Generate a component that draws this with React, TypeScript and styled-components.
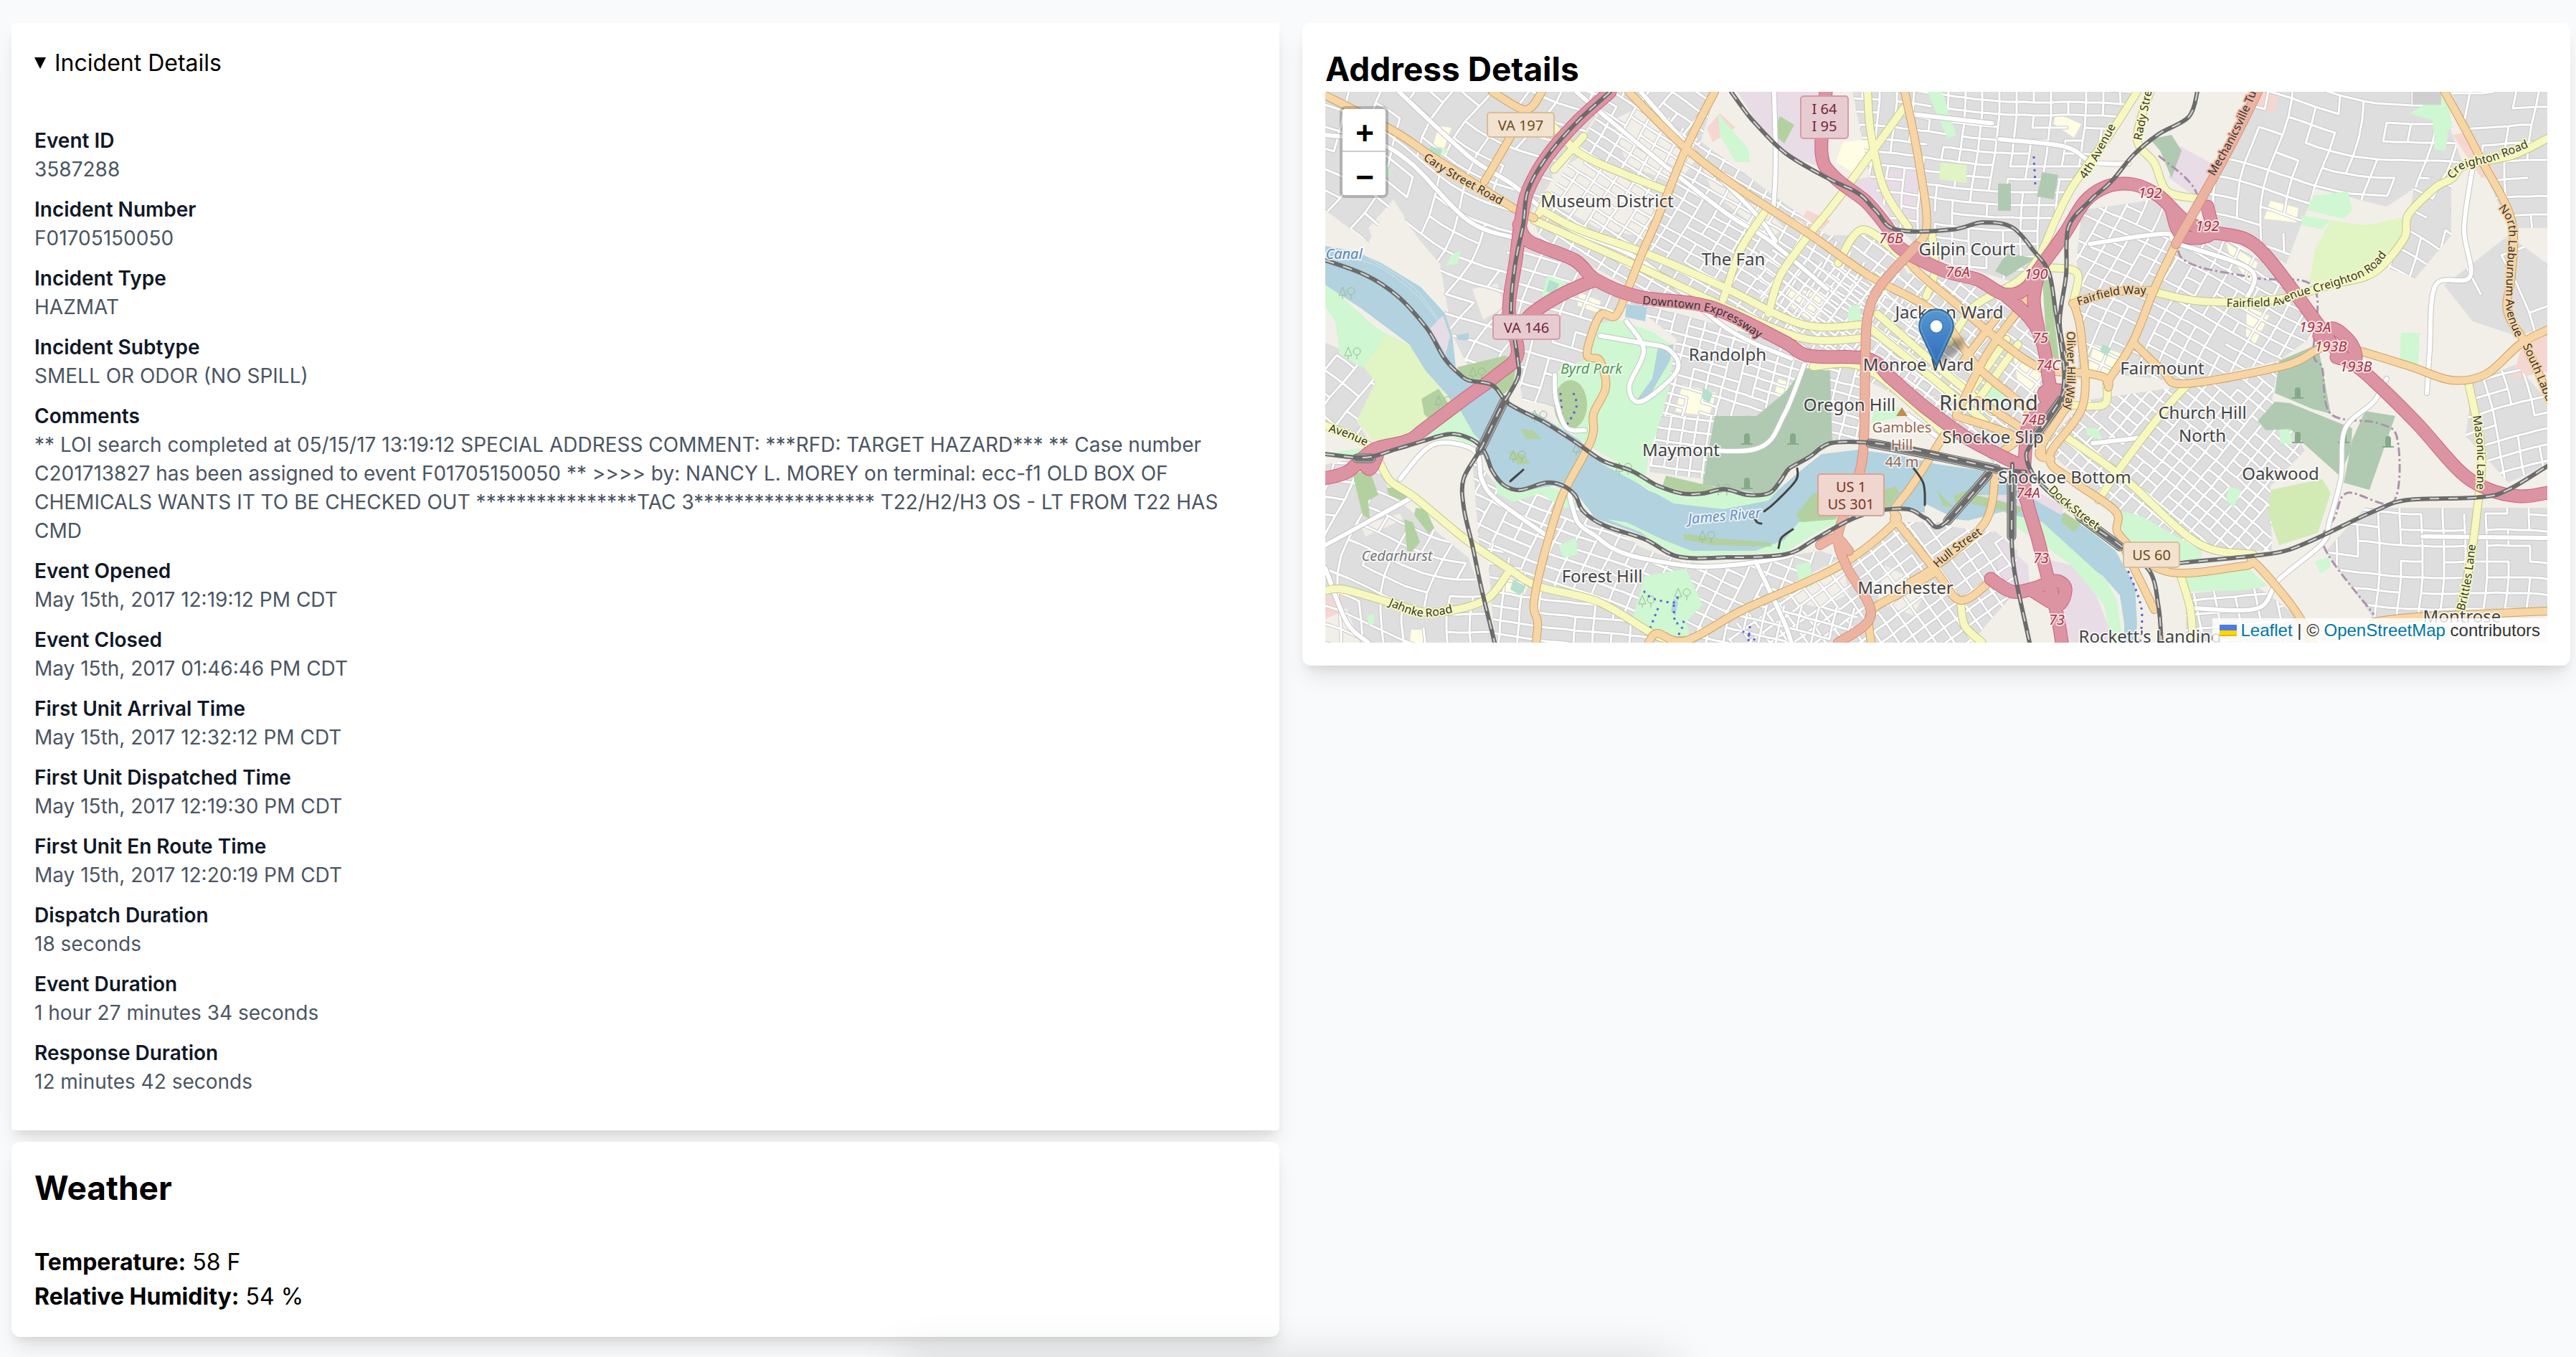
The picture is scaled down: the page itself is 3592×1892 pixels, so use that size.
import React from 'react';
import styled, { createGlobalStyle } from 'styled-components';

const sans = `Inter, "Liberation Sans", sans-serif`;
const mapSans = `"Noto Sans", "Open Sans", sans-serif`;

const GlobalStyle = createGlobalStyle`
  *, *::before, *::after { box-sizing: border-box; }
  body {
    margin: 0;
    background: #f9fafb;
    color: #000;
    font-family: ${sans};
    font-size: 32px;
    line-height: 48px;
  }
  h2, p, dl, dt, dd { margin: 0; }
`;

/* ---------- page ---------- */

const Page = styled.main`
  display: grid;
  grid-template-columns: repeat(2, minmax(0, 1fr));
  align-items: start;
  gap: 32px;
  padding: 32px 8px 28px 16px;
`;

const Column = styled.div`
  display: flex;
  flex-direction: column;
  gap: 16px;
`;

const Card = styled.section<{ $radius?: number }>`
  padding: 32px;
  background: #fff;
  border-radius: ${(p) => p.$radius ?? 12}px;
  box-shadow: 0 20px 30px -6px rgba(0, 0, 0, 0.1), 0 8px 12px -4px rgba(0, 0, 0, 0.07);
`;

const Title = styled.h2`
  font-size: 46px;
  line-height: 64px;
  font-weight: 700;
`;

const Summary = styled.summary`
  display: flex;
  align-items: center;
  gap: 12px;
  list-style: none;
  cursor: pointer;

  &::-webkit-details-marker { display: none; }

  &::before {
    content: '';
    width: 16px;
    height: 16px;
    background: #000;
    clip-path: polygon(0 0, 100% 0, 50% 100%);
  }

  details:not([open]) > &::before { transform: rotate(-90deg); }
`;

const Fields = styled.dl`
  display: flex;
  flex-direction: column;
  gap: 16px;
  padding: 64px 0 16px;
  font-size: 28px;
  line-height: 40px;
`;

const Label = styled.dt`
  color: #111827;
  font-weight: 600;
`;

const Value = styled.dd`
  color: #4b5563;
`;

const Readings = styled.div`
  padding-top: 48px;
`;

const ToastShadow = styled.div`
  position: fixed;
  top: 100%;
  left: 50%;
  width: 1080px;
  height: 120px;
  transform: translateX(-50%);
  box-shadow: 0 0 64px rgba(0, 0, 0, 0.13);
  pointer-events: none;
`;

/* ---------- map chrome ---------- */

const MapBox = styled.div`
  position: relative;
  height: 768px;
  overflow: hidden;
  background: #ddd;
`;

const MapDrawing = styled.svg`
  display: block;
  width: 100%;
  height: 100%;
`;

const ZoomBar = styled.div`
  position: absolute;
  top: 20px;
  left: 20px;
  display: flex;
  flex-direction: column;
  border: 4px solid rgba(0, 0, 0, 0.2);
  border-radius: 8px;
  background-clip: padding-box;
`;

const ZoomButton = styled.button`
  width: 60px;
  height: 60px;
  padding: 10px 0 0 2px;
  border: 0;
  background: #fff;
  color: #000;
  font: 700 44px/48px "Liberation Sans", Arial, sans-serif;
  cursor: pointer;

  &:first-child {
    border-bottom: 2px solid #ccc;
    border-radius: 4px 4px 0 0;
  }
  &:last-child { border-radius: 0 0 4px 4px; }
`;

const Pin = styled.svg`
  position: absolute;
  left: 50%;
  bottom: 50%;
  width: 82px;
  height: 82px;
  margin-left: -25px;
`;

const Attribution = styled.div`
  position: absolute;
  right: 0;
  bottom: 0;
  padding: 0 10px;
  background: rgba(255, 255, 255, 0.8);
  color: #333;
  font: 24px/34px "Liberation Sans", Helvetica, Arial, sans-serif;

  a {
    color: #0078a8;
    text-decoration: none;
  }
  svg {
    width: 24px;
    height: 16px;
    margin-right: 6px;
  }
`;

/* ---------- map drawing ---------- */

const Area = styled.path<{ $fill: string }>`
  fill: ${(p) => p.$fill};
`;

const Line = styled.path<{ $color: string; $width: number; $dash?: string }>`
  fill: none;
  stroke: ${(p) => p.$color};
  stroke-width: ${(p) => p.$width}px;
  stroke-dasharray: ${(p) => p.$dash ?? 'none'};
  stroke-linejoin: round;
  stroke-linecap: ${(p) => (p.$dash ? 'butt' : 'round')};
`;

const MapText = styled.text<{ $size?: number; $color?: string; $italic?: boolean; $halo?: string; $start?: boolean }>`
  font-family: ${mapSans};
  font-size: ${(p) => p.$size ?? 24}px;
  font-style: ${(p) => (p.$italic ? 'italic' : 'normal')};
  fill: ${(p) => p.$color ?? '#444'};
  stroke: ${(p) => p.$halo ?? 'rgba(255, 255, 255, 0.7)'};
  stroke-width: 4px;
  stroke-linejoin: round;
  paint-order: stroke;
  text-anchor: ${(p) => (p.$start ? 'start' : 'middle')};
`;

const ShieldText = styled.text<{ $color: string }>`
  font-family: ${mapSans};
  font-size: 20px;
  fill: ${(p) => p.$color};
  text-anchor: middle;
`;

type Point = [number, number];

const parse = (list: string): Point[] =>
  list.split(' ').map((pair) => pair.split(',').map(Number) as Point);

const polygon = (list: string) => `M${list.split(' ').join('L')}Z`;

/* A smooth curve through every point of the list. */
const curve = (list: string) => {
  const p = parse(list);
  let d = `M${p[0]}`;
  for (let i = 0; i < p.length - 1; i++) {
    const a = p[i - 1] ?? p[i];
    const b = p[i];
    const c = p[i + 1];
    const e = p[i + 2] ?? c;
    d += `C${Math.round(b[0] + (c[0] - a[0]) / 6)},${Math.round(b[1] + (c[1] - a[1]) / 6)} ${Math.round(
      c[0] - (e[0] - b[0]) / 6,
    )},${Math.round(c[1] - (e[1] - b[1]) / 6)} ${c}`;
  }
  return d;
};

const random = (seed: number) => () => {
  seed = (seed * 16807) % 2147483647;
  return seed / 2147483647;
};

interface Zone {
  shape: string;
  angle: number;
  dx: number;
  dy: number;
  bend: number;
  skip: number;
}

const zones: Zone[] = [
  { shape: '0,0 400,0 275,185 258,300 262,385 200,385 178,340 167,309 160,240 130,210 95,150 60,210 0,165', angle: 28, dx: 40, dy: 28, bend: 12, skip: 0.24 },
  { shape: '290,180 400,0 430,0 850,310 850,450 640,345 430,275 300,205', angle: 31, dx: 24, dy: 15, bend: 2, skip: 0.06 },
  { shape: '425,0 545,0 520,80 600,150 700,200 780,200 840,300 852,320 640,180', angle: 37, dx: 25, dy: 20, bend: 2, skip: 0.2 },
  { shape: '735,0 1130,0 1042,132 1000,240 960,265 840,230 790,180 760,120', angle: 4, dx: 24, dy: 18, bend: 4, skip: 0.18 },
  { shape: '265,190 420,285 400,310 370,370 325,390 320,440 275,430 262,340', angle: 20, dx: 28, dy: 22, bend: 5, skip: 0.2 },
  { shape: '420,290 640,350 745,372 745,490 704,490 700,385 664,385 640,430 600,452 470,452 490,345', angle: 16, dx: 22, dy: 14, bend: 2, skip: 0.08 },
  { shape: '600,220 760,250 900,260 985,310 1005,400 935,520 860,455 750,375 610,330', angle: 38, dx: 19, dy: 15, bend: 1, skip: 0.06 },
  { shape: '1060,430 1200,410 1310,385 1330,375 1320,430 1366,500 1318,550 1320,640 1216,640 1100,580 1000,495', angle: 40, dx: 19, dy: 16, bend: 1, skip: 0.07 },
  { shape: '1055,165 1160,150 1195,200 1260,205 1310,240 1385,335 1330,375 1198,405 1090,392 1050,400 1048,230', angle: 27, dx: 24, dy: 18, bend: 3, skip: 0.15 },
  { shape: '1300,0 1550,0 1590,110 1540,120 1480,160 1380,135 1340,240 1250,190 1216,160', angle: 10, dx: 34, dy: 26, bend: 9, skip: 0.2 },
  { shape: '1570,0 1704,0 1704,190 1650,190 1610,95', angle: 3, dx: 32, dy: 25, bend: 7, skip: 0.25 },
  { shape: '1520,120 1570,110 1570,200 1520,260 1480,245 1512,170', angle: 25, dx: 32, dy: 28, bend: 9, skip: 0.3 },
  { shape: '1560,270 1650,200 1704,240 1704,330 1660,340 1600,320', angle: -20, dx: 52, dy: 44, bend: 6, skip: 0.5 },
  { shape: '560,768 583,722 720,660 800,600 920,600 965,640 960,700 900,768', angle: -36, dx: 21, dy: 18, bend: 1, skip: 0.08 },
  { shape: '205,510 250,560 320,555 345,570 440,635 495,655 560,660 690,640 720,650 520,760 460,755 383,712 296,689 215,640', angle: 22, dx: 26, dy: 18, bend: 4, skip: 0.14 },
  { shape: '0,520 70,505 90,560 200,650 240,768 0,768', angle: 12, dx: 32, dy: 25, bend: 14, skip: 0.24 },
  { shape: '225,620 300,690 383,712 470,768 236,768', angle: 8, dx: 26, dy: 19, bend: 3, skip: 0.16 },
  { shape: '500,768 600,715 750,720 720,768', angle: 14, dx: 24, dy: 20, bend: 2, skip: 0.12 },
  { shape: '1200,700 1300,690 1360,735 1380,768 1200,768', angle: -8, dx: 28, dy: 20, bend: 3, skip: 0.15 },
  { shape: '1395,640 1450,580 1704,580 1704,720 1510,735 1462,735', angle: 3, dx: 30, dy: 22, bend: 4, skip: 0.18 },
  { shape: '1600,405 1660,380 1704,430 1704,520 1650,545 1590,480', angle: -14, dx: 28, dy: 22, bend: 4, skip: 0.2 },
  { shape: '0,350 55,372 70,405 44,459 60,485 0,460', angle: 30, dx: 30, dy: 26, bend: 8, skip: 0.25 },
  { shape: '458,452 550,452 530,540 452,530', angle: 8, dx: 18, dy: 18, bend: 1, skip: 0.08 },
];

const streets = (zone: Zone, seed: number) => {
  const pts = parse(zone.shape);
  const xs = pts.map((p) => p[0]);
  const ys = pts.map((p) => p[1]);
  const cx = (Math.min(...xs) + Math.max(...xs)) / 2;
  const cy = (Math.min(...ys) + Math.max(...ys)) / 2;
  const reach = Math.hypot(Math.max(...xs) - cx, Math.max(...ys) - cy) + 30;
  const rad = (zone.angle * Math.PI) / 180;
  const next = random(seed * 7919 + 13);
  const place = (x: number, y: number) => {
    const u = x + zone.bend * Math.sin(y / 41 + seed);
    const v = y + zone.bend * Math.sin(x / 53 + seed * 2);
    return `${Math.round(cx + u * Math.cos(rad) - v * Math.sin(rad))},${Math.round(cy + u * Math.sin(rad) + v * Math.cos(rad))}`;
  };
  let d = '';
  for (let y = -reach; y < reach; y += zone.dy) {
    for (let x = -reach; x < reach; x += zone.dx) {
      if (next() > zone.skip) d += `M${place(x, y)}L${place(x + zone.dx / 2, y)}L${place(x + zone.dx, y)}`;
      if (next() > zone.skip) d += `M${place(x, y)}L${place(x, y + zone.dy)}`;
    }
  }
  return d;
};

const colors = {
  land: '#f2efe9',
  built: '#dedede',
  park: '#cff7d1',
  golf: '#e0f5c3',
  wood: '#b3d1a0',
  cemetery: '#b0cab2',
  school: '#fffde4',
  industry: '#e8dce7',
  retail: '#f6d6d1',
  pitch: '#b4e0cd',
  water: '#b1d2de',
};

/* Grounds that the street grid runs across. */
const grounds: [string, string][] = [
  [colors.land, '318,112 354,92 480,150 455,205 380,190 306,150'],
  [colors.land, '400,40 440,20 520,90 490,130 420,100'],
  [colors.land, '520,90 600,150 640,190 620,205 540,140'],
  [colors.land, '60,190 95,150 130,205 160,240 172,310 130,262 75,225'],
  [colors.land, '205,275 240,268 250,300 220,318'],
  [colors.land, '90,545 130,500 190,500 200,640 140,590'],
  [colors.land, '50,605 104,588 108,596 56,620'],
  [colors.land, '0,730 30,720 48,768 0,768'],
  [colors.land, '620,700 720,650 730,700 690,720'],
  [colors.land, '780,660 840,690 820,730 770,712'],
  [colors.industry, '575,0 692,0 692,105 660,95 624,72 600,40'],
  [colors.industry, '727,125 824,105 832,185 800,185 767,150'],
  [colors.industry, '1192,76 1240,102 1216,148 1176,120'],
  [colors.industry, '1000,650 1060,665 1090,740 1100,768 1030,768 1022,690'],
  [colors.industry, '936,620 980,660 982,690 940,690'],
  [colors.retail, '672,165 704,180 680,205 655,190'],
  [colors.retail, '1302,0 1330,0 1322,32 1296,20'],
  [colors.retail, '1666,362 1704,335 1704,390 1656,400'],
  [colors.retail, '1572,60 1596,56 1636,118 1612,120'],
  [colors.retail, '300,168 430,220 425,235 296,180'],
  [colors.retail, '0,708 24,700 22,725 0,735'],
  [colors.retail, '550,30 572,50 540,70 532,50'],
  [colors.school, '1018,29 1054,45 1044,64 1016,45'],
  [colors.school, '1318,152 1357,162 1354,182 1309,177'],
  [colors.school, '1256,210 1300,238 1290,268 1262,230'],
  [colors.school, '1285,300 1316,312 1296,352 1284,340'],
  [colors.school, '1072,352 1112,366 1090,400 1062,392'],
  [colors.school, '722,70 768,66 735,112 712,98'],
  [colors.school, '640,270 700,285 685,325 650,300'],
  [colors.school, '498,408 545,420 535,452 488,446'],
  [colors.school, '632,400 666,412 660,430 626,424'],
  [colors.school, '250,672 282,690 274,708 242,696'],
  [colors.school, '354,280 384,292 380,308 352,298'],
  [colors.school, '960,368 1000,380 996,420 966,408'],
  [colors.school, '120,750 138,750 136,768 118,768'],
  [colors.school, '158,48 176,50 166,78 150,76'],
];

const parks: [string, string][] = [
  [colors.park, '548,30 590,80 592,98 572,98 550,60'],
  [colors.park, '840,0 860,0 880,60 868,66 852,30'],
  [colors.park, '1512,30 1562,0 1572,50 1546,62 1544,40'],
  [colors.park, '1548,55 1566,52 1562,82 1546,80'],
  [colors.park, '1378,145 1426,139 1432,165 1420,177 1369,165'],
  [colors.park, '1360,172 1402,179 1390,192 1362,186'],
  [colors.park, '1500,336 1526,336 1524,382 1498,380'],
  [colors.park, '310,256 336,265 330,292 302,286'],
  [colors.park, '730,300 744,296 748,318 728,320'],
  [colors.park, '930,408 954,424 942,446 916,434'],
  [colors.park, '766,444 800,440 808,452 760,462'],
  [colors.park, '80,104 90,106 88,120 78,116'],
  [colors.park, '164,78 172,82 166,88 160,84'],
  [colors.park, '176,228 190,220 184,240 168,242'],
  [colors.park, '1108,585 1135,590 1222,640 1222,655 1130,655 1112,620'],
  [colors.park, '1192,672 1288,665 1314,689 1282,695 1204,697'],
  [colors.park, '1380,655 1400,648 1402,662 1388,672'],
  [colors.park, '656,660 676,655 680,690 662,690'],
  [colors.park, '326,632 350,622 352,645 332,650'],
  [colors.park, '58,730 68,728 68,742 60,744'],
  [colors.park, '1260,550 1278,556 1266,580 1256,570'],
  [colors.park, '1060,468 1078,470 1084,488 1062,478'],
  [colors.park, '1330,468 1344,472 1350,492 1332,490'],
  [colors.golf, '1402,179 1450,186 1504,175 1501,205 1456,252 1372,266 1380,220'],
  [colors.golf, '858,99 894,102 894,127 856,122'],
  ['#d2ebb5', '1318,555 1390,540 1402,559 1384,615 1330,632 1315,589'],
  [colors.cemetery, '1330,375 1384,352 1402,449 1376,442 1324,420'],
  [colors.cemetery, '1300,459 1324,432 1345,434 1432,469 1430,500 1414,535 1366,492 1346,470 1312,472'],
  [colors.cemetery, '1450,445 1492,452 1456,555 1420,545 1432,485'],
  [colors.cemetery, '1150,66 1180,60 1194,82 1180,120 1164,82'],
  [colors.cemetery, '1000,112 1022,116 1016,150 992,146'],
  [colors.cemetery, '938,128 956,128 956,166 938,166'],
  [colors.cemetery, '950,225 990,232 950,258 934,250'],
  [colors.wood, '1000,262 1010,262 1024,380 1006,360'],
  [colors.wood, '634,34 654,46 640,72 624,58'],
  ['#cfcfcf', '1516,0 1556,0 1556,18 1516,18'],
  [colors.park, '0,265 55,315 96,352 86,338 50,384 20,366 14,320 0,300'],
  [colors.park, '40,310 86,338 100,360 60,388 40,376'],
  [colors.golf, '86,338 117,352 140,389 162,415 182,440 136,472 113,485 67,487 44,459 70,405 54,384'],
  [colors.park, '180,430 217,492 205,490 176,480 130,490 136,472'],
  [colors.wood, '134,428 158,414 172,435 150,460 138,450'],
  [colors.park, '383,322 411,318 457,335 486,355 480,410 469,452 451,509 446,539 377,499 325,465 319,395 365,372'],
  [colors.cemetery, '667,385 704,389 707,492 664,515 641,529 618,562 526,548 543,452 601,452 641,419'],
  [colors.wood, '475,535 530,548 570,558 520,562 470,550'],
  [colors.wood, '184,384 250,368 268,372 262,410 245,425 190,398'],
  [colors.park, '446,675 503,665 526,715 503,739 509,762 486,762 428,735'],
  [colors.wood, '38,532 62,528 74,562 60,570 62,596 52,590'],
  [colors.wood, '86,552 112,552 122,564 110,572 88,562'],
  [colors.wood, '110,596 122,600 132,628 120,642 138,648 114,640'],
  [colors.wood, '126,580 140,582 152,608 144,616 124,590'],
];

const river =
  '0,215 40,222 77,238 133,272 167,309 177,339 182,385 195,398 230,405 262,440 296,449 354,485 377,509 411,529 451,556 486,570 555,576 618,567 658,532 692,505 744,499 801,507 852,519 922,529 976,556 1036,592 1066,612 1102,640 1114,662 1129,689 1132,742 1129,768 1114,768 1114,742 1108,702 1084,675 1030,639 988,609 946,585 892,599 850,590 801,580 760,585 721,592 681,615 652,635 629,642 503,642 469,629 434,615 377,595 354,565 319,549 273,557 239,539 222,512 210,482 187,442 140,389 117,352 50,302 0,269';

const banks: [string, string][] = [
  [colors.park, '262,440 296,452 354,494 388,520 440,548 486,574 555,582 618,570 640,545 612,566 555,558 500,566 440,538 380,508 330,474'],
  [colors.park, '0,504 60,512 110,495 176,480 200,492 215,485 200,470 170,465 110,485 60,495'],
  [colors.park, '236,540 262,560 310,550 340,560 352,580 330,580 300,560 262,572 240,560'],
  [colors.park, '393,596 440,614 465,632 500,648 640,642 690,612 740,588 660,600 640,625 600,640 510,640 470,624 420,600'],
  [colors.wood, '272,470 290,472 302,484 280,484'],
  [colors.wood, '254,500 276,506 286,518 268,520'],
  [colors.wood, '500,616 540,622 620,628 622,634 540,632 500,624'],
  [colors.wood, '680,560 710,555 724,560 712,596 664,600 656,590'],
  [colors.wood, '774,556 796,550 800,560 780,586'],
  [colors.wood, '876,564 892,556 930,564 974,580 966,588 900,574 880,578'],
  [colors.wood, '852,554 868,572 880,580 862,578'],
  [colors.industry, '906,562 960,562 975,580 940,570'],
  [colors.industry, '976,548 1030,578 1026,590 984,566'],
  [colors.park, '960,590 1000,600 1046,642 1090,682 1104,710 1112,768 1096,768 1086,716 1040,660 1000,630 958,604'],
  [colors.wood, '1030,586 1054,602 1044,614 1026,600'],
  [colors.land, '836,574 880,596 950,604 930,614 870,606 836,590'],
  [colors.water, '420,296 448,300 446,320 418,314'],
  [colors.water, '464,356 486,352 480,376 460,410 450,430 434,430 456,400'],
  [colors.water, '486,706 492,712 488,730 482,724'],
  [colors.water, '182,340 200,336 200,346 186,346'],
  [colors.industry, '146,330 164,312 174,340 168,366'],
  [colors.pitch, '147,75 163,82 158,92 145,88'],
  [colors.pitch, '312,262 326,268 320,282 308,278'],
  [colors.pitch, '262,680 280,690 272,702 258,694'],
  [colors.pitch, '526,412 540,420 536,434 526,428'],
  [colors.pitch, '1084,352 1096,358 1090,368 1080,362'],
];

const roads = {
  white: [
    '103,0 200,90 262,130 340,190 440,235 560,330 650,372',
    '350,0 470,100 560,170 620,208 700,275',
    '440,0 520,90 600,170 628,208',
    '626,0 628,90 625,160',
    '0,60 70,70 120,100 200,180 270,205',
    '476,500 480,496 600,498 640,450 668,380',
    '940,66 1030,76 1070,98 1120,100',
    '808,30 930,44',
    '1066,212 1170,198 1190,212 1290,248 1284,290',
    '1600,104 1588,190 1596,258 1548,270 1540,360 1536,420',
    '1480,400 1462,432 1422,470 1416,540 1400,600 1390,630 1330,680 1300,720 1210,720',
    '1530,620 1704,622',
    '340,560 352,600 378,620 400,636 440,650 520,662 600,656 650,646',
    '0,632 124,564',
    '104,540 150,492 208,500 218,540 238,568 310,620',
    '600,655 640,740 650,768',
    '0,664 30,740 60,768',
    '1070,490 1140,482',
    '812,450 852,480',
    '320,395 322,430 336,468 362,472',
    '383,340 440,350 480,360 490,390 440,432 424,410 444,360 420,320',
  ],
  yellow: [
    '302,165 354,192 446,225 555,272 664,324 747,325',
    '291,179 440,245 549,296 664,343 747,344',
    '319,49 354,85 411,112 480,139',
    '360,62 319,108',
    '310,145 298,170',
    '612,169 578,222 555,289',
    '807,22 715,149 670,205 635,255 618,309',
    '756,0 761,59 779,135 813,189',
    '715,239 750,192 810,236',
    '1132,0 1090,65 1042,132 1018,179 994,232 964,265 905,299 870,350',
    '1150,0 1132,65 1156,99 1174,139 1216,149',
    '1704,65 1654,89 1590,102 1572,120 1546,135 1510,172 1504,205 1462,252 1402,269 1330,289 1222,292 1156,279',
    '1006,245 1048,252 1043,292',
    '0,465 55,489 73,512 90,542 124,565 193,622 256,665 296,689 383,712 463,759 503,765',
    '0,695 27,694 90,712 136,725 182,722 228,705 256,669',
    '1202,409 1174,439 1108,525 1078,569',
    '1030,479 1114,539 1216,629 1294,645',
    '1090,405 1086,436 1042,437',
    '1192,672 1206,720 1210,768',
    '886,712 892,745 916,768',
    '1594,405 1612,502 1606,585 1594,669 1582,722',
    '760,330 850,402 920,460',
    '770,310 860,388 930,446',
    '680,383 750,384 835,450 870,484',
    '950,345 890,430',
    '966,352 910,430',
    '846,200 850,250 838,285',
  ],
  orange: [
    '0,5 96,55 147,89 210,129 262,162 291,176',
    '233,0 279,25 302,0',
    '279,25 222,125',
    '423,0 503,79 583,139 670,195 756,255 852,309 910,384 985,450 1000,509',
    '543,0 503,79 469,162 446,215 423,272 405,312 383,312 365,365 383,375 391,412 374,449 371,485 331,562 308,635 291,712 296,739 294,768',
    '808,0 829,105 838,192 814,235 880,296 944,350 1000,386 1060,392 1090,400 1092,412',
    '1186,212 1156,275 1126,349 1090,405',
    '1561,0 1612,95 1654,179 1654,255 1648,305 1672,349 1704,420',
    '1704,332 1666,352 1618,394 1570,402 1510,382 1432,359 1390,357 1337,382 1198,407 1168,389 1126,349',
    '1042,295 1102,279 1156,277',
    '1045,299 1054,339 1057,435 1010,508 1042,542 1102,585 1108,619 1174,669 1282,661 1294,655 1342,709 1366,745 1376,768',
    '1036,436 996,500 1012,512',
    '1116,640 1138,685 1156,722',
    '862,480 820,546 793,582 793,602 715,662 583,722 503,765 463,755 451,768',
    '793,595 852,669 886,709 928,682',
    '852,669 802,699 761,725 761,768',
    '934,532 920,600 850,662 814,685',
    '978,290 920,370 880,450',
    '936,315 890,375',
    '880,452 960,480 946,500',
    '910,430 970,468',
    '1462,739 1522,732 1704,724',
  ],
  salmon: [
    '824,215 773,272 756,315 753,372 750,502 733,565 715,619 727,662 761,729 715,768',
    '690,632 712,622 730,640',
    '1300,0 1264,72 1216,159 1186,212',
  ],
  pink: [
    '397,0 354,39 308,92 282,139 272,185 265,239 256,305 268,365 239,395 193,429 136,472 113,487 67,499 32,529 0,539',
    '270,185 285,209 348,235 377,262 434,285 514,295 560,309 641,349 675,368 755,372 790,400 835,439 889,479 945,509 972,522',
    '377,262 331,282 285,312 266,345',
    '50,512 62,526 72,508',
    '698,0 692,85 710,119 756,155 784,189 802,218 862,249 910,262 946,282 976,275 994,249 1030,199 1060,152 1090,132 1126,129 1162,145 1198,179 1234,195 1282,205 1312,229 1348,275 1390,332 1414,365 1450,392 1522,462 1582,529 1624,555 1666,564 1704,559',
    '1180,165 1190,195 1210,204 1236,196 1230,160',
    '1386,340 1406,330 1430,350 1436,374 1410,370',
    '946,282 982,315 1000,349 1009,402 1012,429 982,462 976,502 976,559 994,625 1006,672 1018,719 1027,768',
    '994,255 988,290 994,330',
    '1012,440 1002,420 1020,416 1036,418',
    '928,679 958,697 988,692 1018,682 1032,692 1022,715 988,697',
  ],
};

const rails = [
  '0,235 55,255 101,285 141,329 165,370 182,389 199,402 233,409 256,435 308,462 354,492 388,515 428,529 463,549 497,560 526,560 555,554 589,562 618,560 635,542 647,525 675,509 704,490 756,489 801,495 862,508 934,525 976,530',
  '0,505 55,510 96,499 136,487 176,477 205,485 222,502 233,529 250,549 273,555 308,545 331,549 348,562 360,585 388,604 446,624 492,648 560,649 641,645 681,625 727,599 767,585 813,582 838,595 862,603 926,532',
  '397,0 354,39 308,92 282,139 276,185 265,239 259,305 268,372 268,400 245,440 216,499 193,539 193,579 205,632 216,685 236,768',
  '566,0 595,39 641,85 698,119 744,142 767,165 796,192 874,192 916,182 958,189 988,222 1009,252 1018,305 1030,385 1028,425',
  '1216,0 1204,35 1162,59 1126,89 1096,125 1066,152 1036,189 1033,255 1024,322 1034,385 1027,425 988,485 978,512 1000,549 1060,599 1108,632 1150,669 1162,719 1166,768',
  '1192,657 1294,647 1342,639 1390,619 1462,585 1510,569 1612,565 1651,554 1704,522',
  '958,519 957,619 961,669 982,768',
];

const bridges = ['250,430 216,500', '44,511 64,511', '760,490 862,510 936,526', '1026,430 990,480', '924,534 868,598', '957,540 957,620', '1052,592 1108,634'];

const darkLines = [
  '258,543 276,527',
  '658,525 656,542 630,570 612,585',
  '596,590 602,600 608,602',
  '632,636 636,622 652,610',
  '818,522 834,546 836,576',
];

const trees = [
  [24, 280], [32, 364], [158, 432], [206, 392], [292, 452], [350, 498], [410, 525],
  [548, 554], [442, 710], [492, 700], [262, 508], [526, 620],
];

const graves = [[588, 484], [652, 484], [588, 546], [1356, 420], [1420, 482], [1482, 488], [1356, 482]];

const dots = ['322,420 334,470', '346,420 350,440 336,466', '328,420 330,450', '444,696 456,706 486,712 492,700', '464,720 452,750', '486,715 488,740 500,740 488,766', '1116,660 1138,720 1136,768', '582,752 600,765', '592,745 590,768', '988,90 990,130'];

const boundary =
  '1162,89 1216,145 1192,229 1294,259 1378,272 1378,365 1390,385 1402,449 1468,462 1495,485 1489,572 1426,559 1408,592 1393,635 1462,729';

const places: [string, number, number, number?][] = [
  ['Museum District', 393, 161],
  ['The Fan', 569, 242],
  ['Randolph', 561, 375],
  ['Gilpin Court', 895, 228],
  ['Jackson Ward', 870, 316],
  ['Monroe Ward', 827, 389],
  ['Oregon Hill', 731, 445],
  ['Richmond', 925, 444, 29],
  ['Shockoe Slip', 931, 490],
  ['Shockoe Bottom', 1031, 546],
  ['Maymont', 496, 508],
  ['Forest Hill', 386, 684],
  ['Manchester', 809, 700],
  ['Fairmount', 1167, 394],
  ['Church Hill', 1223, 456],
  ['North', 1223, 488],
  ['Oakwood', 1332, 541],
  ['Montrose', 1585, 740],
  ["Rockett's Landing", 1150, 768],
];

const exits: [string, number, number][] = [
  ['76B', 789, 211], ['76A', 882, 258], ['190', 991, 261], ['192', 1150, 148], ['192', 1230, 194],
  ['193A', 1380, 335], ['193B', 1402, 362], ['193B', 1437, 390], ['75', 997, 350], ['74C', 1008, 388],
  ['74B', 987, 464], ['74A', 980, 566], ['73', 998, 657], ['73', 1020, 743],
];

const roadLabels: [string, string, string][] = [
  ['Cary Street Road', '136,94 180,122 262,168', '#f7d5a5'],
  ['Downtown Expressway', '442,296 515,303 560,316 620,354', '#dc93a2'],
  ['Fairfield Way', '1050,298 1100,284 1160,282', '#f7d5a5'],
  ['Fairfield Avenue Creighton Road', '1257,300 1325,298 1356,286 1400,274 1450,256 1478,230 1500,190', '#f6f8c0'],
  ['Creighton Road', '1572,122 1590,106 1630,96 1700,68', '#f6f8c0'],
  ['4th Avenue', '1060,122 1080,90 1110,34', '#f6f8c0'],
  ['Rady Street', '1138,68 1146,30 1160,-40', '#f6f8c0'],
  ['Mechanicsville Turnpike', '1240,118 1272,60 1306,-20 1330,-120', '#edb3a1'],
  ['North Laburnum Avenue', '1636,162 1650,190 1647,260 1648,310 1668,360', '#f7d5a5'],
  ['South Laburnum', '1670,354 1690,400 1730,500', '#f7d5a5'],
  ['Oliver Hill Way', '1034,334 1034,400 1030,460', '#f7d5a5'],
  ['Masonic Lane', '1600,452 1606,500 1605,570', '#f6f8c0'],
  ['Brittles Lane', '1588,724 1598,680 1606,610', '#f6f8c0'],
  ['Dock Street', '1008,556 1040,585 1090,622', '#f6f8c0'],
  ['Hull Street', '854,664 880,642 940,600', '#f7d5a5'],
  ['Jahnke Road', '88,716 136,732 194,722', '#f6f8c0'],
  ['Avenue', '4,474 30,482 80,506', '#f6f8c0'],
];

const shields: { lines: string[]; x: number; y: number; w: number; h: number; fill: string; edge: string; ink: string }[] = [
  { lines: ['VA 197'], x: 226, y: 29, w: 93, h: 34, fill: '#f2e2cf', edge: '#d8bd99', ink: '#6b4c1c' },
  { lines: ['VA 146'], x: 234, y: 311, w: 93, h: 34, fill: '#e6ccd1', edge: '#d59ba8', ink: '#71273f' },
  { lines: ['I 64', 'I 95'], x: 663, y: 6, w: 66, h: 59, fill: '#e6ccd1', edge: '#d59ba8', ink: '#71273f' },
  { lines: ['US 1', 'US 301'], x: 687, y: 533, w: 92, h: 58, fill: '#efd6cf', edge: '#dba392', ink: '#7a3522' },
  { lines: ['US 60'], x: 1113, y: 628, w: 78, h: 35, fill: '#f2e2cf', edge: '#d8bd99', ink: '#6b4c1c' },
];

function Roads({ list, edge, fill, width }: { list: string[]; edge: string; fill: string; width: number }) {
  const d = list.map(curve).join('');
  return (
    <>
      <Line d={d} $color={edge} $width={width + 2} />
      <Line d={d} $color={fill} $width={width} />
    </>
  );
}

function Areas({ list }: { list: [string, string][] }) {
  return (
    <>
      {list.map(([fill, shape]) => (
        <Area key={shape} $fill={fill} d={polygon(shape)} />
      ))}
    </>
  );
}

function CityMap() {
  return (
    <MapDrawing viewBox="0 0 1704 768" preserveAspectRatio="xMidYMid slice" role="img" aria-label="Map of Richmond">
      <defs>
        {zones.map((zone, i) => (
          <clipPath id={`zone-${i}`} key={i}>
            <path d={polygon(zone.shape)} />
          </clipPath>
        ))}
        {roadLabels.map(([, path], i) => (
          <path id={`road-${i}`} key={i} d={curve(path)} />
        ))}
      </defs>
      <rect width="1704" height="768" fill={colors.land} />
      {zones.map((zone, i) => (
        <Area key={i} $fill={colors.built} d={polygon(zone.shape)} />
      ))}
      <Areas list={grounds} />
      {zones.map((zone, i) => {
        const d = streets(zone, i + 1);
        return (
          <g key={i} clipPath={`url(#zone-${i})`}>
            <Line d={d} $color="#c8c8c8" $width={5} />
            <Line d={d} $color="#fff" $width={3} />
          </g>
        );
      })}
      <Areas list={parks} />
      <Area $fill={colors.water} d={polygon(river)} />
      <Areas list={banks} />
      <ellipse cx="342" cy="436" rx="23" ry="34" fill={colors.wood} />
      <Line d={curve('0,232 60,238 110,268 150,310 170,350')} $color="#d5e6ec" $width={1} />
      <Line d={curve('60,232 120,270 160,320')} $color="#d5e6ec" $width={1} />
      {trees.map(([x, y], i) => (
        <g key={i} transform={`translate(${x} ${y})`} fill="none" stroke="#9db795" strokeWidth="1">
          <path d="M0-8L-5 4H5ZM0 4V9" />
          <circle cx="12" cy="-2" r="5" />
          <path d="M12 3V9" />
        </g>
      ))}
      {graves.map(([x, y], i) => (
        <path key={i} transform={`translate(${x} ${y})`} d="M-4 6V-4A4 4 0 0 1 4-4V6H8V8H-8V6Z" fill="#86a98a" />
      ))}
      <Line d={curve(boundary)} $color="#ab93ab" $width={3} $dash="12 4 3 4" />
      {dots.map((d) => (
        <Line key={d} d={curve(d)} $color="#5b62d8" $width={3} $dash="3 6" />
      ))}

      <Roads list={roads.white} edge="#c4c4c4" fill="#fff" width={6} />
      <Roads list={roads.yellow} edge="#c3c58a" fill="#f6f8c0" width={10} />
      <Roads list={roads.orange} edge="#c9a263" fill="#f7d5a5" width={10} />
      <Roads list={roads.pink} edge="#cf5f7f" fill="#dc93a2" width={17} />
      <Roads list={roads.salmon} edge="#d39079" fill="#edb3a1" width={12} />
      <Line d={bridges.map(curve).join('')} $color="#5d5d5d" $width={13} />
      <Line d={bridges.map(curve).join('')} $color="#c9c9c9" $width={11} />
      <Line d={bridges.map(curve).join('')} $color="#777" $width={9} />
      <Line d={rails.map(curve).join('')} $color="#6b6b6b" $width={6} />
      <Line d={rails.map(curve).join('')} $color="#d4d4d4" $width={2} $dash="13 13" />
      <Line d={darkLines.map(curve).join('')} $color="#444" $width={3} />

      {roadLabels.map(([name, , halo], i) => (
        <MapText key={i} $size={16} $color="#333" $halo={halo} $start>
          <textPath href={`#road-${i}`}>{name}</textPath>
        </MapText>
      ))}
      {exits.map(([name, x, y], i) => (
        <MapText key={i} x={x} y={y} $size={20} $color="#a5333f" $italic>
          {name}
        </MapText>
      ))}
      <path d="M804 440L812 452H796Z" fill="#c58b4c" />
      {['Gambles', 'Hill', '44 m'].map((word, i) => (
        <MapText key={word} x={804} y={475 + i * 24} $size={20} $color="#99664d">
          {word}
        </MapText>
      ))}
      <MapText x={26} y={233} $size={20} $color="#5b85b8" $italic>Canal</MapText>
      <MapText x={557} y={598} $size={20} $color="#6c8fc4" $italic transform="rotate(-5 557 598)">James River</MapText>
      <MapText x={371} y={393} $size={20} $color="#4f9a55" $italic>Byrd Park</MapText>
      <MapText x={100} y={654} $size={20} $color="#777" $italic>Cedarhurst</MapText>
      {places.map(([name, x, y, size]) => (
        <MapText key={name} x={x} y={y} $size={size}>
          {name}
        </MapText>
      ))}
      {shields.map((s) => (
        <g key={s.lines[0]}>
          <rect x={s.x} y={s.y} width={s.w} height={s.h} rx="4" fill={s.fill} stroke={s.edge} strokeWidth="2" />
          {s.lines.map((line, i) => (
            <ShieldText key={line} x={s.x + s.w / 2} y={s.y + 25 + i * 24} $color={s.ink}>
              {line}
            </ShieldText>
          ))}
        </g>
      ))}
    </MapDrawing>
  );
}

function Marker() {
  return (
    <Pin viewBox="0 0 41 41" aria-hidden="true">
      <defs>
        <linearGradient id="pin-fill" x1="0" y1="0" x2="0" y2="1">
          <stop offset="0" stopColor="#5698d0" />
          <stop offset="1" stopColor="#2f6bbd" />
        </linearGradient>
        <filter id="pin-blur" x="-30%" y="-30%" width="160%" height="160%">
          <feGaussianBlur stdDeviation="1.5" />
        </filter>
      </defs>
      <path d="M12.500 40L19 24Q24 20 31 21Q34 25 27 31Z" fill="#000" opacity=".3" filter="url(#pin-blur)" />
      <path
        d="M12.500.6C5.900.6.6 5.900.6 12.500c0 2.300.9 4.600 2 6.700L12.500 40.400l9.900-21.200c1.100-2.100 2-4.400 2-6.700C24.400 5.900 19.100.6 12.500.6Z"
        fill="url(#pin-fill)"
        stroke="#2e6c97"
        strokeWidth="1"
      />
      <path
        d="M12.500 1.700C6.500 1.700 1.700 6.500 1.700 12.500c0 2 .8 4.100 1.900 6.200L12.500 37.700l8.900-19c1.100-2.100 1.900-4.200 1.900-6.200 0-6-4.800-10.800-10.800-10.800Z"
        fill="none"
        stroke="#fff"
        strokeOpacity=".15"
        strokeWidth="1"
      />
      <circle cx="12.500" cy="12.500" r="5" fill="#3f7db8" />
      <circle cx="12.500" cy="12.500" r="4.200" fill="#fff" />
    </Pin>
  );
}

/* ---------- content ---------- */

const fields: [string, string][] = [
  ['Event ID', '3587288'],
  ['Incident Number', 'F01705150050'],
  ['Incident Type', 'HAZMAT'],
  ['Incident Subtype', 'SMELL OR ODOR (NO SPILL)'],
  [
    'Comments',
    '** LOI search completed at 05/15/17 13:19:12 SPECIAL ADDRESS COMMENT: ***RFD: TARGET HAZARD*** ** Case number C201713827 has been assigned to event F01705150050 ** >>>> by: NANCY L. MOREY on terminal: ecc-f1 OLD BOX OF CHEMICALS WANTS IT TO BE CHECKED OUT ****************TAC 3****************** T22/H2/H3 OS - LT FROM T22 HAS CMD',
  ],
  ['Event Opened', 'May 15th, 2017 12:19:12 PM CDT'],
  ['Event Closed', 'May 15th, 2017 01:46:46 PM CDT'],
  ['First Unit Arrival Time', 'May 15th, 2017 12:32:12 PM CDT'],
  ['First Unit Dispatched Time', 'May 15th, 2017 12:19:30 PM CDT'],
  ['First Unit En Route Time', 'May 15th, 2017 12:20:19 PM CDT'],
  ['Dispatch Duration', '18 seconds'],
  ['Event Duration', '1 hour 27 minutes 34 seconds'],
  ['Response Duration', '12 minutes 42 seconds'],
];

export default function App() {
  return (
    <>
      <GlobalStyle />
      <Page>
        <Column>
          <Card $radius={4}>
            <details open>
              <Summary>Incident Details</Summary>
              <Fields>
                {fields.map(([label, value]) => (
                  <div key={label}>
                    <Label>{label}</Label>
                    <Value>{value}</Value>
                  </div>
                ))}
              </Fields>
            </details>
          </Card>
          <Card>
            <Title>Weather</Title>
            <Readings>
              <p><strong>Temperature:</strong> 58 F</p>
              <p><strong>Relative Humidity:</strong> 54 %</p>
            </Readings>
          </Card>
        </Column>
        <Card>
          <Title>Address Details</Title>
          <MapBox>
            <CityMap />
            <Marker />
            <ZoomBar>
              <ZoomButton type="button" aria-label="Zoom in">+</ZoomButton>
              <ZoomButton type="button" aria-label="Zoom out">−</ZoomButton>
            </ZoomBar>
            <Attribution>
              <a href="#leaflet">
                <svg viewBox="0 0 12 8" aria-hidden="true">
                  <path fill="#4c7be1" d="M0 0h12v4H0z" />
                  <path fill="#ffd500" d="M0 4h12v3H0z" />
                  <path fill="#e0bc00" d="M0 7h12v1H0z" />
                </svg>
                Leaflet
              </a>
              {' | © '}
              <a href="#openstreetmap">OpenStreetMap</a> contributors
            </Attribution>
          </MapBox>
        </Card>
      </Page>
      <ToastShadow />
    </>
  );
}
